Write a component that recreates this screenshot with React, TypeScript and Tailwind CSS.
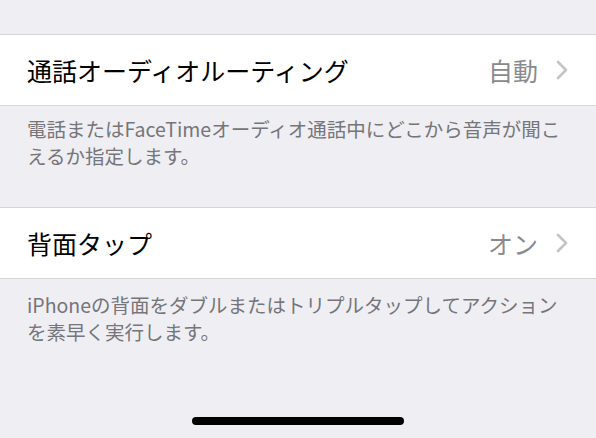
import React from "react";

const font = { fontFamily: '"Noto Sans CJK JP", "Noto Sans", sans-serif' };

function Chevron() {
  return (
    <svg width="12" height="20" viewBox="0 0 12 20" className="shrink-0">
      <path d="M2 2 L10 10 L2 18" fill="none" stroke="#c4c4c8" strokeWidth="2.6" strokeLinecap="round" strokeLinejoin="round" />
    </svg>
  );
}

function Row({ title, value }: { title: string; value: string }) {
  return (
    <div className="flex h-[72px] items-center border-y border-[#d6d6da] bg-white pl-[27px] pr-[28px]">
      <div className="flex-1 text-[25px] text-black leading-none">{title}</div>
      <div className="flex items-center gap-[18px]">
        <span className="text-[25px] leading-none text-[#8a8a8e]">{value}</span>
        <Chevron />
      </div>
    </div>
  );
}

export default function App() {
  return (
    <div className="flex h-[438px] w-[596px] flex-col overflow-hidden bg-[#efeff3]" style={font}>
      <div className="h-[34px]" />
      <Row title="通話オーディオルーティング" value="自動" />
      <div className="h-[101px] whitespace-nowrap px-[27px] pt-[9px] text-[19.5px] leading-[27px] text-[#75757a]">
        電話またはFaceTimeオーディオ通話中にどこから音声が聞こ
        <br />
        えるか指定します。
      </div>
      <Row title="背面タップ" value="オン" />
      <div className="whitespace-nowrap px-[27px] pt-[12px] text-[19.5px] leading-[27px] text-[#75757a]">
        iPhoneの背面をダブルまたはトリプルタップしてアクション
        <br />
        を素早く実行します。
      </div>
      <div className="flex-1" />
      <div className="flex justify-center pb-[13px]">
        <div className="h-[8px] w-[212px] rounded-full bg-black" />
      </div>
    </div>
  );
}
